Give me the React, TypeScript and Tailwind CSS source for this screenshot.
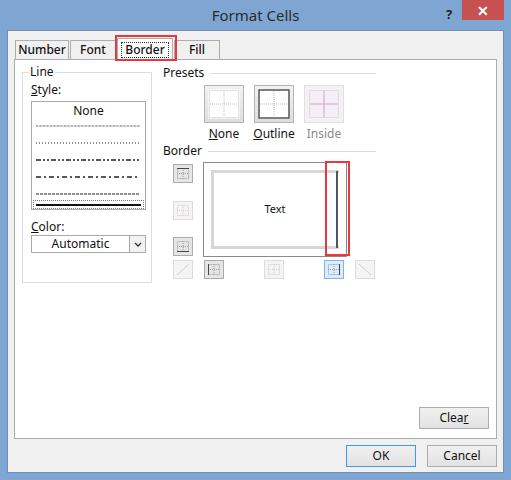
import React from "react";

const font = { fontFamily: '"Noto Sans", "Open Sans", sans-serif' };

// small square toggle buttons around the border preview
const Cell = ({ kind, dim, active }: { kind: string; dim?: boolean; active?: boolean }) => {
  const c = dim ? "#d8c8d8" : "#9a9a9a";
  return (
    <div
      className={`w-[20px] h-[19px] border flex items-center justify-center ${
        active ? "border-[#7eb4ea] bg-[#dcecfc]" : dim ? "border-[#dcdcdc] bg-[#f4f4f4]" : "border-[#acacac] bg-[#e5e5e5]"
      }`}
    >
      <svg width="14" height="13" viewBox="0 0 14 13">
        {kind === "diag1" ? (
          <line x1="1" y1="12" x2="13" y2="1" stroke={c} />
        ) : kind === "diag2" ? (
          <line x1="1" y1="1" x2="13" y2="12" stroke={c} />
        ) : (
          <g fill="none">
            <rect x="1.5" y="1.5" width="11" height="10" stroke={c} strokeDasharray="1 1" />
            <line x1="7" y1="1" x2="7" y2="12" stroke={c} strokeDasharray="1 1" />
            <line x1="1" y1="6.5" x2="13" y2="6.5" stroke={c} strokeDasharray="1 1" />
            {kind === "top" && <line x1="1" y1="1.5" x2="13" y2="1.5" stroke="#444" />}
            {kind === "bottom" && <line x1="1" y1="11.5" x2="13" y2="11.5" stroke="#444" />}
            {kind === "left" && <line x1="1.5" y1="1" x2="1.5" y2="12" stroke="#444" />}
            {kind === "right" && <line x1="12.5" y1="1" x2="12.5" y2="12" stroke="#444" />}
          </g>
        )}
      </svg>
    </div>
  );
};

const Preset = ({ kind }: { kind: "none" | "outline" | "inside" }) => (
  <div
    className={`w-[40px] h-[38px] border flex items-center justify-center ${
      kind === "inside" ? "border-[#e0e0e0] bg-[#f2f2f2]" : "border-[#b5b5b5] bg-gradient-to-b from-[#f2f2f2] to-[#dedede]"
    }`}
  >
    <svg width="32" height="30" viewBox="0 0 32 30">
      <rect x="0.5" y="0.5" width="31" height="29" fill={kind === "inside" ? "#f6eef6" : "#fff"} stroke="none" />
      {kind === "outline" ? (
        <rect x="1" y="1" width="30" height="28" fill="none" stroke="#555" strokeWidth="1.5" />
      ) : (
        <rect x="1.5" y="1.5" width="29" height="27" fill="none" stroke="#c8c8c8" strokeDasharray="1 1" />
      )}
      <line x1="16" y1="2" x2="16" y2="28" stroke={kind === "inside" ? "#c8a8c8" : "#bbb"} strokeDasharray={kind === "inside" ? undefined : "1 1"} />
      <line x1="2" y1="15" x2="30" y2="15" stroke={kind === "inside" ? "#c8a8c8" : "#bbb"} strokeDasharray={kind === "inside" ? undefined : "1 1"} />
    </svg>
  </div>
);

const Btn = ({ children, focus }: { children: React.ReactNode; focus?: boolean }) => (
  <div
    className={`w-[70px] h-[22px] flex items-center justify-center text-[12px] text-[#111] border bg-gradient-to-b from-[#f0f0f0] to-[#e2e2e2] ${
      focus ? "border-[#3c9af0]" : "border-[#adadad]"
    }`}
  >
    {children}
  </div>
);

const Tab = ({ label, active }: { label: string; active?: boolean }) => (
  <div
    className={`border border-[#adadad] border-b-0 flex items-center justify-center text-[12px] font-medium text-[#111] ${
      active ? "bg-white h-[22px] -mb-px relative z-10" : "bg-[#f0f0f0] h-[19px]"
    }`}
    style={{ width: label === "Number" ? 54 : label === "Font" ? 46 : label === "Border" ? 56 : 46 }}
  >
    <span className={active ? "border border-dotted border-[#333] px-[3px] leading-[14px]" : ""}>{label}</span>
  </div>
);

const LineSample = ({ dash, w = 1 }: { dash?: string; w?: number }) => (
  <svg width="104" height="4" viewBox="0 0 104 4" className="block">
    <line x1="0" y1="2" x2="104" y2="2" stroke="#222" strokeWidth={w} strokeDasharray={dash} />
  </svg>
);

export default function App() {
  return (
    <div className="w-[511px] h-[480px] bg-[#7fa6d3] flex flex-col" style={font}>
      {/* title bar */}
      <div className="h-[30px] relative flex items-center justify-center">
        <span className="text-[15px] text-[#2b2b2b]">Format Cells</span>
        <span className="absolute left-[446px] top-[5px] text-[13px] font-bold text-[#222]">?</span>
        <div className="absolute left-[462px] top-0 w-[42px] h-[20px] bg-[#c75050] flex items-center justify-center text-white text-[14px] font-bold">
          ✕
        </div>
      </div>

      {/* client area */}
      <div className="mx-[7px] mb-[7px] flex-1 bg-[#f0f0f0] border border-[#6f8fb8] pl-[6px] pr-[6px] pt-[6px] flex flex-col">
        <div className="flex items-end gap-[1px] h-[22px] pl-[1px] relative">
          <Tab label="Number" />
          <Tab label="Font" />
          <Tab label="Border" active />
          <Tab label="Fill" />
          {/* red highlight */}
          <div className="absolute left-[101px] top-[-2px] w-[62px] h-[26px] border-2 border-[#e8383d] z-20" />
        </div>

        <div className="h-[380px] bg-white border border-[#adadad] flex pt-[5px] pl-[7px] relative">
          {/* Line group */}
          <fieldset className="w-[130px] h-[218px] border border-[#dcdcdc] px-[8px] pb-0 m-0 min-w-0">
            <legend className="text-[12px] text-[#111] px-[1px] -ml-[2px] leading-[14px]">Line</legend>
            <div className="text-[12px] text-[#111] mt-[2px] mb-[2px]">
              <u>S</u>tyle:
            </div>
            <div className="w-[115px] h-[109px] border border-[#aaa] pl-[4px] pt-[1px]">
              <div className="text-[12px] text-center text-[#111] pr-[4px] leading-[16px]">None</div>
              <div className="flex flex-col gap-[13px] mt-[5px]">
                <LineSample dash="0.7 0.7" />
                <LineSample dash="1 2" />
                <LineSample dash="5 2 2 2 2 2" w={1.3} />
                <LineSample dash="5 3 2 3" w={1.3} />
                <LineSample dash="3 1" />
              </div>
              <div className="mt-[4px] -ml-[3px] w-[111px] h-[9px] border border-dotted border-[#777] flex items-center px-[2px]">
                <div className="w-full h-[2px] bg-[#111]" />
              </div>
            </div>
            <div className="text-[12px] text-[#111] mt-[9px] leading-[15px] mb-0">
              <u>C</u>olor:
            </div>
            <div className="w-[115px] h-[18px] border border-[#aaa] flex mt-[1px]">
              <div className="flex-1 text-[12px] text-center leading-[16px] text-[#111]">Automatic</div>
              <div className="w-[16px] border-l border-[#aaa] bg-[#f2f2f2] flex items-center justify-center">
                <svg width="8" height="5" viewBox="0 0 8 5">
                  <path d="M1 1l3 3 3-3" fill="none" stroke="#333" strokeWidth="1.3" />
                </svg>
              </div>
            </div>
          </fieldset>

          {/* right column */}
          <div className="ml-[11px] w-[213px] flex flex-col -mt-[1px]">
            <div className="flex items-center gap-[6px]">
              <span className="text-[12px] text-[#111]">Presets</span>
              <div className="flex-1 h-px bg-[#dcdcdc]" />
            </div>
            <div className="flex ml-[41px] gap-[10px] mt-[3px]">
              {(["none", "outline", "inside"] as const).map((k) => (
                <div key={k} className="flex flex-col items-center w-[40px]">
                  <Preset kind={k} />
                  <span className={`text-[12px] mt-[2px] ${k === "inside" ? "text-[#8a8a8a]" : "text-[#111]"}`}>
                    {k === "none" ? (
                      <>
                        <u>N</u>one
                      </>
                    ) : k === "outline" ? (
                      <>
                        <u>O</u>utline
                      </>
                    ) : (
                      "Inside"
                    )}
                  </span>
                </div>
              ))}
            </div>
            <div className="flex items-center gap-[6px] -mt-[1px]">
              <span className="text-[12px] text-[#111]">Border</span>
              <div className="flex-1 h-px bg-[#dcdcdc]" />
            </div>
            <div className="flex mt-[2px] ml-[10px]">
              <div className="flex flex-col justify-between w-[20px] h-[94px] pt-[2px]">
                <Cell kind="top" />
                <Cell kind="mid" dim />
                <Cell kind="bottom" />
              </div>
              <div className="ml-[10px] w-[144px] h-[95px] border border-[#8a8a8a] relative flex items-center justify-center">
                <div className="absolute left-[7px] top-[7px] right-[7px] bottom-[7px] border-[3px] border-r-0 border-[#d6d6d6]" />
                <div className="absolute right-[8px] top-[8px] bottom-[8px] w-[2px] bg-[#555]" />
                <span className="text-[11px] text-[#111] relative">Text</span>
                {/* red highlight */}
                <div className="absolute left-[121px] top-[-2px] w-[25px] h-[95px] border-2 border-[#e8383d]" />
              </div>
            </div>
            <div className="flex items-center mt-[3px] ml-[10px]">
              <Cell kind="diag1" dim />
              <div className="ml-[11px]">
                <Cell kind="left" />
              </div>
              <div className="ml-[40px]">
                <Cell kind="vmid" dim />
              </div>
              <div className="ml-[40px]">
                <Cell kind="right" active />
              </div>
              <div className="ml-[11px]">
                <Cell kind="diag2" dim />
              </div>
            </div>
          </div>

          <div className="absolute right-[7px] bottom-[9px]">
            <Btn>
              Clea<u>r</u>
            </Btn>
          </div>
        </div>

        <div className="flex justify-end gap-[11px] pt-[6px]">
          <Btn focus>OK</Btn>
          <Btn>Cancel</Btn>
        </div>
      </div>
    </div>
  );
}
